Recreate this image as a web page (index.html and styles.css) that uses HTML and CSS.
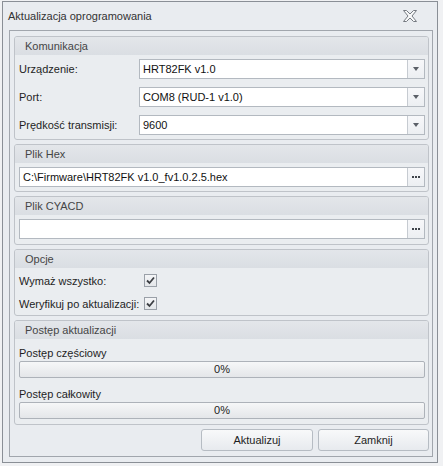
FILE: index.html
```html
<!DOCTYPE html>
<html lang="pl">
<head>
<meta charset="utf-8">
<title>Aktualizacja oprogramowania</title>
<link rel="stylesheet" href="styles.css">
</head>
<body>
<div class="window">
  <div class="titlebar">
    <span class="title">Aktualizacja oprogramowania</span>
    <svg class="close" width="14" height="12" viewBox="0 0 14 12"><polygon points="0.5,0.5 3.5,0.5 7,4 10.5,0.5 13.5,0.5 9,6 13.5,11.5 10.5,11.5 7,8 3.5,11.5 0.5,11.5 5,6" fill="#f7f8f9" stroke="#767b82" stroke-width="1"/></svg>
  </div>
  <div class="client">
    <section class="group">
      <div class="ghead">Komunikacja</div>
      <div class="gbody form">
        <label class="lbl">Urządzenie:</label>
        <div class="combo"><span class="val">HRT82FK v1.0</span><span class="dd"><i class="arrow"></i></span></div>
        <label class="lbl">Port:</label>
        <div class="combo"><span class="val">COM8 (RUD-1 v1.0)</span><span class="dd"><i class="arrow"></i></span></div>
        <label class="lbl">Prędkość transmisji:</label>
        <div class="combo"><span class="val">9600</span><span class="dd"><i class="arrow"></i></span></div>
      </div>
    </section>
    <section class="group">
      <div class="ghead">Plik Hex</div>
      <div class="gbody">
        <div class="combo"><span class="val">C:\Firmware\HRT82FK v1.0_fv1.0.2.5.hex</span><span class="dd dots"><i></i><i></i><i></i></span></div>
      </div>
    </section>
    <section class="group">
      <div class="ghead">Plik CYACD</div>
      <div class="gbody file2">
        <div class="combo"><span class="val"></span><span class="dd dots"><i></i><i></i><i></i></span></div>
      </div>
    </section>
    <section class="group">
      <div class="ghead">Opcje</div>
      <div class="gbody opts">
        <label class="lbl">Wymaż wszystko:</label>
        <span class="check"><svg width="9" height="9" viewBox="0 0 9 9"><path d="M1 4.5 L3.5 7 L8 1.5" fill="none" stroke="#3c3f44" stroke-width="1.8"/></svg></span>
        <label class="lbl">Weryfikuj po aktualizacji:</label>
        <span class="check"><svg width="9" height="9" viewBox="0 0 9 9"><path d="M1 4.5 L3.5 7 L8 1.5" fill="none" stroke="#3c3f44" stroke-width="1.8"/></svg></span>
      </div>
    </section>
    <section class="group">
      <div class="ghead">Postęp aktualizacji</div>
      <div class="gbody prog">
        <div class="plabel">Postęp częściowy</div>
        <div class="bar">0%</div>
        <div class="plabel second">Postęp całkowity</div>
        <div class="bar">0%</div>
      </div>
    </section>
    <div class="buttons">
      <button class="btn b1">Aktualizuj</button>
      <button class="btn b2">Zamknij</button>
    </div>
  </div>
</div>
</body>
</html>
```
FILE: styles.css
```css
html, body {
  margin: 0;
  padding: 0;
}
body {
  background: #f0f1f3;
  font-family: "Liberation Sans", Arial, sans-serif;
  font-size: 11px;
  color: #1e1e1e;
  width: 443px;
  height: 466px;
  overflow: hidden;
}
.window {
  box-sizing: border-box;
  width: 436px;
  height: 462px;
  margin: 1px 0 0 2px;
  border: 1px solid #8a8f96;
  background: #e9ecf0;
  display: flex;
  flex-direction: column;
}
.titlebar {
  height: 28px;
  display: flex;
  align-items: center;
  justify-content: space-between;
  padding: 0 20px 0 5px;
  flex: none;
}
.title {
  font-size: 11px;
  color: #333;
}
.close {
  display: block;
}
.client {
  box-sizing: border-box;
  margin: 0 4px 0 6px;
  height: 427px;
  border: 1px solid #a1a6ad;
  padding: 5px 3px 5px 4px;
  display: flex;
  flex-direction: column;
  gap: 4px;
}
.group {
  border: 1px solid #bfc3c9;
  border-radius: 3px;
  background: #eaedf0;
  overflow: hidden;
}
.ghead {
  height: 18px;
  line-height: 18px;
  padding-left: 10px;
  background: linear-gradient(#e3e6ea, #dadee3);
  color: #454545;
}
.gbody {
  padding: 4px 3px 4px 4px;
}
.file2 {
  padding-bottom: 5px;
}
.form {
  display: grid;
  grid-template-columns: 120px 1fr;
  row-gap: 8px;
  align-items: center;
}
.lbl {
  color: #1e1e1e;
}
.combo {
  box-sizing: border-box;
  height: 20px;
  border: 1px solid #b3b9c0;
  background: #fff;
  display: flex;
}
.val {
  flex: 1;
  padding-left: 3px;
  line-height: 18px;
  white-space: nowrap;
  overflow: hidden;
  color: #111;
}
.dd {
  width: 16px;
  border-left: 1px solid #c6cbd1;
  background: linear-gradient(#f7f8fa, #eceff2);
  display: flex;
  align-items: center;
  justify-content: center;
}
.arrow {
  width: 0;
  height: 0;
  border-left: 3.5px solid transparent;
  border-right: 3.5px solid transparent;
  border-top: 4px solid #5b6068;
}
.dots {
  gap: 1px;
}
.dots i {
  width: 2px;
  height: 2px;
  background: #3f444b;
}
.opts {
  display: grid;
  grid-template-columns: 125px 1fr;
  grid-auto-rows: 23px;
  align-items: center;
  padding: 1px 3px 0 4px;
}
.check {
  box-sizing: border-box;
  width: 13px;
  height: 13px;
  border: 1px solid #9aa0a8;
  background: linear-gradient(#f4f5f7, #e4e7ea);
  display: flex;
  align-items: center;
  justify-content: center;
}
.check svg {
  display: block;
}
.prog {
  padding: 6px 3px 5px 4px;
}
.plabel {
  height: 16px;
  line-height: 16px;
}
.plabel.second {
  margin-top: 8px;
}
.bar {
  box-sizing: border-box;
  height: 17px;
  border: 1px solid #adb2b9;
  border-radius: 2px;
  background: linear-gradient(#f6f7f8, #e4e6e9);
  text-align: center;
  line-height: 15px;
  color: #222;
}
.buttons {
  display: flex;
  justify-content: flex-end;
  gap: 5px;
}
.btn {
  box-sizing: border-box;
  height: 22px;
  border: 1px solid #b6bcc3;
  border-radius: 3px;
  background: linear-gradient(#f8f9fa, #e7eaee);
  font-family: "Liberation Sans", Arial, sans-serif;
  font-size: 11px;
  font-weight: 400;
  color: #1e1e1e;
  padding: 0;
}
.b1 {
  width: 112px;
}
.b2 {
  width: 111px;
}
```
